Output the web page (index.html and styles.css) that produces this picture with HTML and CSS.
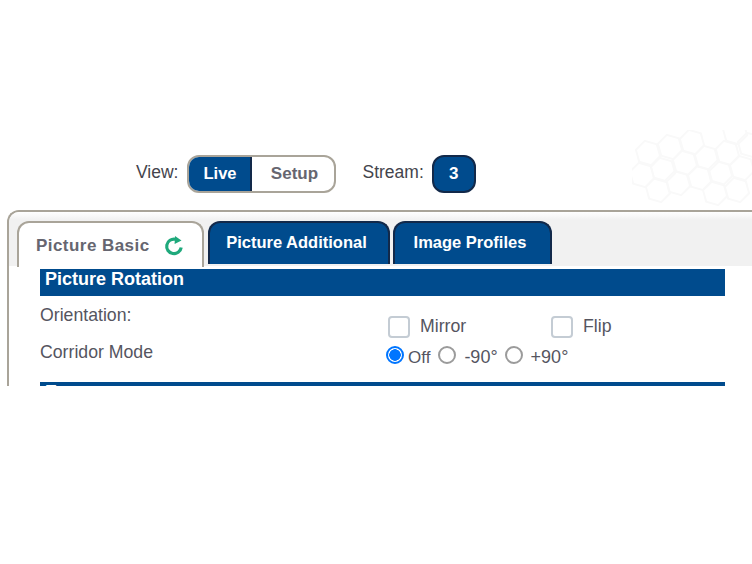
FILE: index.html
```html
<!DOCTYPE html>
<html lang="en">
<head>
    <meta charset="UTF-8">
    <title>Picture Basic</title>
    <link rel="stylesheet" href="styles.css">
</head>
<body>
    <div class="page">
        <header class="top-bar">
            <svg class="hex-bg" width="120" height="80" viewBox="632 130 120 80" fill="none" stroke="#f9f9f9" stroke-width="2">
                <defs>
                    <path id="hex" d="M12.1 3.2L3.2 12.1-8.8 8.8-12.1-3.2-3.2-12.1 8.8-8.8z"/>
                </defs>
                <use href="#hex" x="648" y="153"/>
                <use href="#hex" x="670" y="147"/>
                <use href="#hex" x="692" y="142"/>
                <use href="#hex" x="727" y="153"/>
                <use href="#hex" x="707" y="158"/>
                <use href="#hex" x="685" y="163"/>
                <use href="#hex" x="663" y="170"/>
                <use href="#hex" x="642" y="175"/>
                <use href="#hex" x="700" y="178"/>
                <use href="#hex" x="678" y="183"/>
                <use href="#hex" x="658" y="190"/>
                <use href="#hex" x="720" y="173"/>
                <use href="#hex" x="742" y="168"/>
                <use href="#hex" x="737" y="190"/>
                <use href="#hex" x="715" y="193"/>
                <use href="#hex" x="750" y="145"/>
                <use href="#hex" x="735" y="132"/>
            </svg>
            <span class="top-label">View:</span>
            <div class="switch">
                <span class="switch-item active">Live</span>
                <span class="switch-item">Setup</span>
            </div>
            <span class="top-label stream-label">Stream:</span>
            <span class="stream-btn">3</span>
        </header>

        <div class="panel">
            <div class="tabs">
                <div class="tab tab-active">
                    Picture Basic
                    <svg class="refresh" width="20" height="20" viewBox="0 0 20 20" fill="none">
                        <path d="M11.5 3.2A7.3 7.3 0 1 0 17.2 11.5" stroke="#1fa97c" stroke-width="3.2"/>
                        <path d="M11 0L17.5 4.6 10.6 8z" fill="#1fa97c"/>
                    </svg>
                </div>
                <div class="tab">Picture Additional</div>
                <div class="tab tab-last">Image Profiles</div>
            </div>

            <div class="content">
                <div class="section-title">Picture Rotation</div>
                <div class="row row-orientation">
                    <div class="row-label">Orientation:</div>
                    <label class="check"><input type="checkbox"><span>Mirror</span></label>
                    <label class="check"><input type="checkbox"><span>Flip</span></label>
                </div>
                <div class="row row-corridor">
                    <div class="row-label">Corridor Mode</div>
                    <div class="radios">
                        <input type="radio" name="corridor" checked><span class="radio-off">Off</span>
                        <input type="radio" name="corridor"><span class="radio-text">-90°</span>
                        <input type="radio" name="corridor"><span class="radio-text">+90°</span>
                    </div>
                </div>
                <div class="section-title section-next">Exposure</div>
            </div>
        </div>
    </div>
</body>
</html>
```

FILE: styles.css
```css
:root {
    --blue: #004b8d;
    --navy: #12294a;
    --border: #a9a499;
    --text: #55555f;
}

* {
    margin: 0;
    padding: 0;
    box-sizing: border-box;
}

body {
    background: #fff;
    font-family: "Liberation Sans", Arial, sans-serif;
    color: var(--text);
}

.page {
    width: 752px;
    height: 564px;
    overflow: hidden;
}

.top-bar {
    position: relative;
    height: 210px;
    padding: 155px 0 0 136px;
    display: flex;
    align-items: flex-start;
}

.hex-bg {
    position: absolute;
    left: 632px;
    top: 130px;
}

.top-label {
    position: relative;
    font-size: 17.5px;
    line-height: 34px;
    color: #44444c;
}

.stream-label {
    margin-left: 26px;
}

.switch {
    position: relative;
    display: flex;
    width: 149px;
    height: 38px;
    margin-left: 9px;
    border: 2px solid var(--border);
    border-radius: 12px;
    background: #fff;
    overflow: hidden;
}

.switch-item {
    flex: 1;
    padding-left: 2px;
    font-size: 17px;
    font-weight: bold;
    line-height: 34px;
    text-align: center;
    color: #666670;
}

.switch-item.active {
    flex: 0 0 65px;
    margin: -2px 0 -2px -2px;
    font-size: 16.5px;
    line-height: 37px;
    background: var(--blue);
    border-right: 2px solid var(--navy);
    color: #fff;
}

.stream-btn {
    position: relative;
    width: 44px;
    height: 38px;
    margin-left: 8px;
    border: 2px solid var(--navy);
    border-radius: 12px;
    background: var(--blue);
    color: #fff;
    font-size: 17px;
    font-weight: bold;
    line-height: 34px;
    text-align: center;
}

.panel {
    width: 760px;
    height: 176px;
    margin-left: 7px;
    border: 2px solid var(--border);
    border-bottom: 0;
    border-right: 0;
    border-top-left-radius: 12px;
    overflow: hidden;
}

.tabs {
    display: flex;
    align-items: flex-start;
    height: 54px;
    padding: 9px 0 0 8px;
    background: linear-gradient(#fff 0, #f1f1f1 8px);
}

.tab {
    width: 182px;
    height: 43px;
    margin-right: 3px;
    padding-right: 5px;
    border: 2px solid var(--navy);
    border-bottom: 0;
    border-radius: 12px 12px 0 0;
    background: var(--blue);
    color: #fff;
    font-size: 16.5px;
    font-weight: bold;
    line-height: 39px;
    text-align: center;
}

.tab-active {
    display: flex;
    align-items: center;
    gap: 14px;
    width: 187px;
    height: 46px;
    margin-right: 4px;
    padding: 1px 0 0 17px;
    border-color: var(--border);
    background: #fff;
    color: #666670;
    font-size: 17px;
    letter-spacing: 0.45px;
}

.tab-last {
    width: 159px;
}

.refresh {
    flex: none;
}

.content {
    padding: 3px 42px 0 31px;
    background: #fff;
}

.section-title {
    height: 27px;
    padding-left: 5px;
    background: var(--blue);
    color: #fff;
    font-size: 18px;
    font-weight: bold;
    line-height: 20px;
}

.row {
    display: flex;
    font-size: 17.7px;
}

.row-orientation {
    height: 41px;
    padding-top: 9px;
}

.row-corridor {
    height: 45px;
}

.row-label {
    width: 348px;
    line-height: 20px;
}

.row-corridor .row-label {
    line-height: 30px;
}

.check {
    display: flex;
    align-items: flex-start;
    gap: 10px;
    width: 163px;
    padding-top: 11px;
    line-height: 20px;
}

.check input {
    appearance: none;
    width: 22px;
    height: 22px;
    border: 2px solid #c4ccd4;
    border-radius: 4px;
    background: #fff;
}

.radios {
    display: flex;
    align-items: flex-start;
    margin-left: -2px;
    font-size: 18px;
    line-height: 22px;
    padding-top: 8px;
}

.radios input {
    appearance: none;
    width: 18px;
    height: 18px;
    margin-top: 1px;
    border: 2px solid #9b9b9b;
    border-radius: 50%;
    background: #fff;
}

.radios input:checked {
    border-color: #0075ff;
    background: radial-gradient(circle, #0075ff 0 5.5px, #fff 6px);
}

.radio-off {
    margin: 2px 8px 0 4px;
    font-size: 17px;
}

.radio-text {
    margin: 1px 7px 0 8px;
}

.section-next {
    height: 5px;
    overflow: hidden;
}
```
